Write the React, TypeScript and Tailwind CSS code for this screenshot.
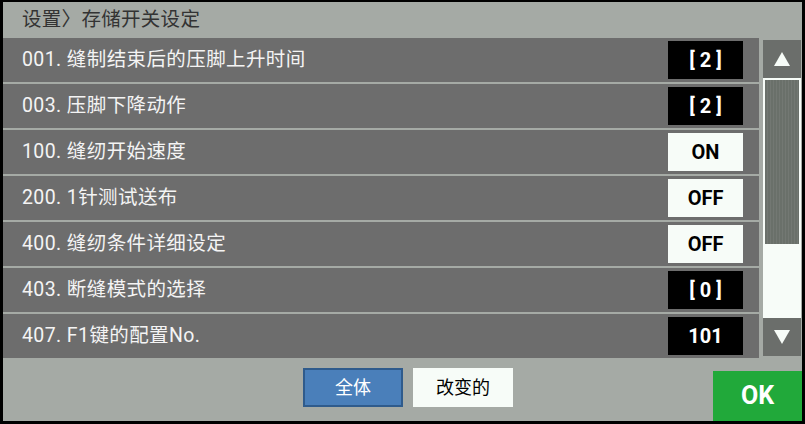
import React from "react";

type Row = { label: string; value: string; kind: "dark" | "light" };

const rows: Row[] = [
  { label: "001. 缝制结束后的压脚上升时间", value: "[ 2 ]", kind: "dark" },
  { label: "003. 压脚下降动作", value: "[ 2 ]", kind: "dark" },
  { label: "100. 缝纫开始速度", value: "ON", kind: "light" },
  { label: "200. 1针测试送布", value: "OFF", kind: "light" },
  { label: "400. 缝纫条件详细设定", value: "OFF", kind: "light" },
  { label: "403. 断缝模式的选择", value: "[ 0 ]", kind: "dark" },
  { label: "407. F1键的配置No.", value: "101", kind: "dark" },
];

const font = "font-['Roboto','Noto_Sans_CJK_SC',sans-serif]";

export default function App() {
  return (
    <div className={`w-[805px] h-[424px] bg-black pt-[2px] pl-[3px] pr-[3px] pb-[3px] ${font}`}>
      <div className="w-full h-full bg-[#a5aaa5] flex flex-col">
        {/* Title */}
        <div className="h-[36px] flex items-center pl-[19px] text-[19.5px] tracking-[0.3px] text-[#333333]">
          设置〉存储开关设定
        </div>

        {/* List + scrollbar */}
        <div className="flex h-[320px]">
          <div className="w-[756px] flex flex-col gap-[2px]">
            {rows.map((r) => (
              <div key={r.label} className="h-[44px] bg-[#6d6d6d] flex items-center pl-[19px] pr-[16px]">
                <span className="text-[19.5px] tracking-[0.4px] text-[#f4f4f4] flex-1">{r.label}</span>
                <span
                  className={
                    r.kind === "dark"
                      ? "w-[75px] h-[38px] bg-black text-white font-bold text-[20px] flex items-center justify-center whitespace-pre"
                      : "w-[75px] h-[38px] bg-[#f7fcf8] text-black font-bold text-[20px] flex items-center justify-center"
                  }
                >
                  {r.value}
                </span>
              </div>
            ))}
          </div>

          {/* Scrollbar */}
          <div className="ml-[4px] w-[38px] pt-[2px] pb-[2px] flex flex-col">
            <div className="h-[38px] bg-[#6b6e6b] flex items-center justify-center">
              <svg width="18" height="16" viewBox="0 0 18 16">
                <polygon points="9,1 17,15 1,15" fill="#f7fcf8" />
              </svg>
            </div>
            <div className="flex-1 bg-[#f7fcf8] px-[2px] pt-[2px] flex flex-col">
              <div className="h-[164px] bg-[repeating-linear-gradient(90deg,#6a706a_0px,#6a706a_2px,#737873_2px,#737873_3px)]" />
            </div>
            <div className="h-[38px] bg-[#6b6e6b] flex items-center justify-center">
              <svg width="18" height="16" viewBox="0 0 18 16">
                <polygon points="1,1 17,1 9,15" fill="#f7fcf8" />
              </svg>
            </div>
          </div>
        </div>

        {/* Bottom bar */}
        <div className="flex-1 flex">
          <div className="flex gap-[10px] pl-[300px] pt-[10px]">
            <button className="w-[100px] h-[39px] bg-[#4a7fba] border-2 border-[#2f5b8c] text-white text-[18px]">
              全体
            </button>
            <button className="w-[100px] h-[39px] bg-[#f7fcf8] text-black text-[18px]">改变的</button>
          </div>
          <button className="ml-auto self-end w-[89px] h-[50px] bg-[#21a93a] text-white text-[25px] font-bold">
            OK
          </button>
        </div>
      </div>
    </div>
  );
}
